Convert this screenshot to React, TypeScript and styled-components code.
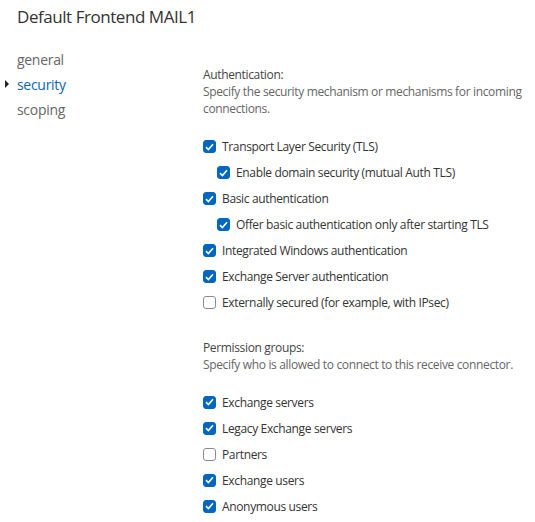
import styled, { createGlobalStyle } from 'styled-components';

const GlobalStyle = createGlobalStyle`
  html, body {
    margin: 0;
    padding: 0;
    background: #fff;
  }
  body {
    font-family: 'Open Sans', 'Noto Sans', sans-serif;
    color: #333;
  }
`;

type Option = { label: string; checked: boolean; nested?: boolean };

const authOptions: Option[] = [
  { label: 'Transport Layer Security (TLS)', checked: true },
  { label: 'Enable domain security (mutual Auth TLS)', checked: true, nested: true },
  { label: 'Basic authentication', checked: true },
  { label: 'Offer basic authentication only after starting TLS', checked: true, nested: true },
  { label: 'Integrated Windows authentication', checked: true },
  { label: 'Exchange Server authentication', checked: true },
  { label: 'Externally secured (for example, with IPsec)', checked: false },
];

const permissionOptions: Option[] = [
  { label: 'Exchange servers', checked: true },
  { label: 'Legacy Exchange servers', checked: true },
  { label: 'Partners', checked: false },
  { label: 'Exchange users', checked: true },
  { label: 'Anonymous users', checked: true },
];

const navItems = ['general', 'security', 'scoping'];

function CheckBox({ checked }: { checked: boolean }) {
  return (
    <Box $checked={checked}>
      {checked && (
        <svg width="9" height="8" viewBox="0 0 9 8">
          <path d="M1 4.2 L3.4 6.5 L8 1.3" fill="none" stroke="#fff" strokeWidth="1.6" />
        </svg>
      )}
    </Box>
  );
}

function OptionList({ items }: { items: Option[] }) {
  return (
    <List>
      {items.map((item) => (
        <Row key={item.label} $nested={item.nested}>
          <CheckBox checked={item.checked} />
          <RowLabel>{item.label}</RowLabel>
        </Row>
      ))}
    </List>
  );
}

export default function App() {
  return (
    <>
      <GlobalStyle />
      <Page>
        <Title>Default Frontend MAIL1</Title>
        <Body>
          <Nav>
            {navItems.map((item) => (
              <NavItem key={item} $active={item === 'security'}>
                {item === 'security' && <Arrow />}
                {item}
              </NavItem>
            ))}
          </Nav>
          <Content>
            <Section>
              <SectionTitle>Authentication:</SectionTitle>
              <SectionText>
                Specify the security mechanism or mechanisms for incoming connections.
              </SectionText>
            </Section>
            <OptionList items={authOptions} />
            <Section $gap={23}>
              <SectionTitle>Permission groups:</SectionTitle>
              <SectionText>Specify who is allowed to connect to this receive connector.</SectionText>
            </Section>
            <OptionList items={permissionOptions} />
          </Content>
        </Body>
      </Page>
    </>
  );
}

const Page = styled.div`
  width: 535px;
  height: 522px;
  box-sizing: border-box;
  padding: 4px 0 0 17px;
  overflow: hidden;
`;

const Title = styled.h1`
  margin: 0;
  font-size: 17px;
  font-weight: 400;
  letter-spacing: -0.45px;
  line-height: 26px;
  color: #333;
`;

const Body = styled.div`
  display: grid;
  grid-template-columns: 186px 1fr;
  margin-top: 17px;
`;

const Nav = styled.nav`
  display: flex;
  flex-direction: column;
`;

const NavItem = styled.div<{ $active?: boolean }>`
  position: relative;
  font-size: 14px;
  letter-spacing: -0.3px;
  line-height: 25px;
  color: ${(p) => (p.$active ? '#0a64b4' : '#666')};
`;

const Arrow = styled.span`
  position: absolute;
  left: -12px;
  top: 8px;
  width: 0;
  height: 0;
  border-top: 4px solid transparent;
  border-bottom: 4px solid transparent;
  border-left: 4px solid #222;
`;

const Content = styled.div`
  display: flex;
  flex-direction: column;
  padding-top: 19px;
  padding-right: 6px;
`;

const Section = styled.div<{ $gap?: number }>`
  margin-top: ${(p) => p.$gap ?? 0}px;
  font-size: 12px;
  letter-spacing: -0.35px;
  line-height: 17px;
`;

const SectionTitle = styled.div`
  color: #444;
`;

const SectionText = styled.div`
  color: #666;
`;

const List = styled.div`
  display: flex;
  flex-direction: column;
  margin-top: 16.5px;
`;

const Row = styled.label<{ $nested?: boolean }>`
  display: flex;
  align-items: center;
  gap: 6px;
  height: 26px;
  padding-left: ${(p) => (p.$nested ? 14 : 0)}px;
  font-size: 12px;
  letter-spacing: -0.35px;
  color: #333;
`;

const Box = styled.span<{ $checked: boolean }>`
  display: flex;
  align-items: center;
  justify-content: center;
  width: 13px;
  height: 13px;
  box-sizing: border-box;
  border-radius: 3px;
  background: ${(p) => (p.$checked ? '#0067c0' : '#fff')};
  border: 1px solid ${(p) => (p.$checked ? '#0067c0' : '#8a8a8a')};
  flex-shrink: 0;
`;

const RowLabel = styled.span`
  white-space: nowrap;
`;
